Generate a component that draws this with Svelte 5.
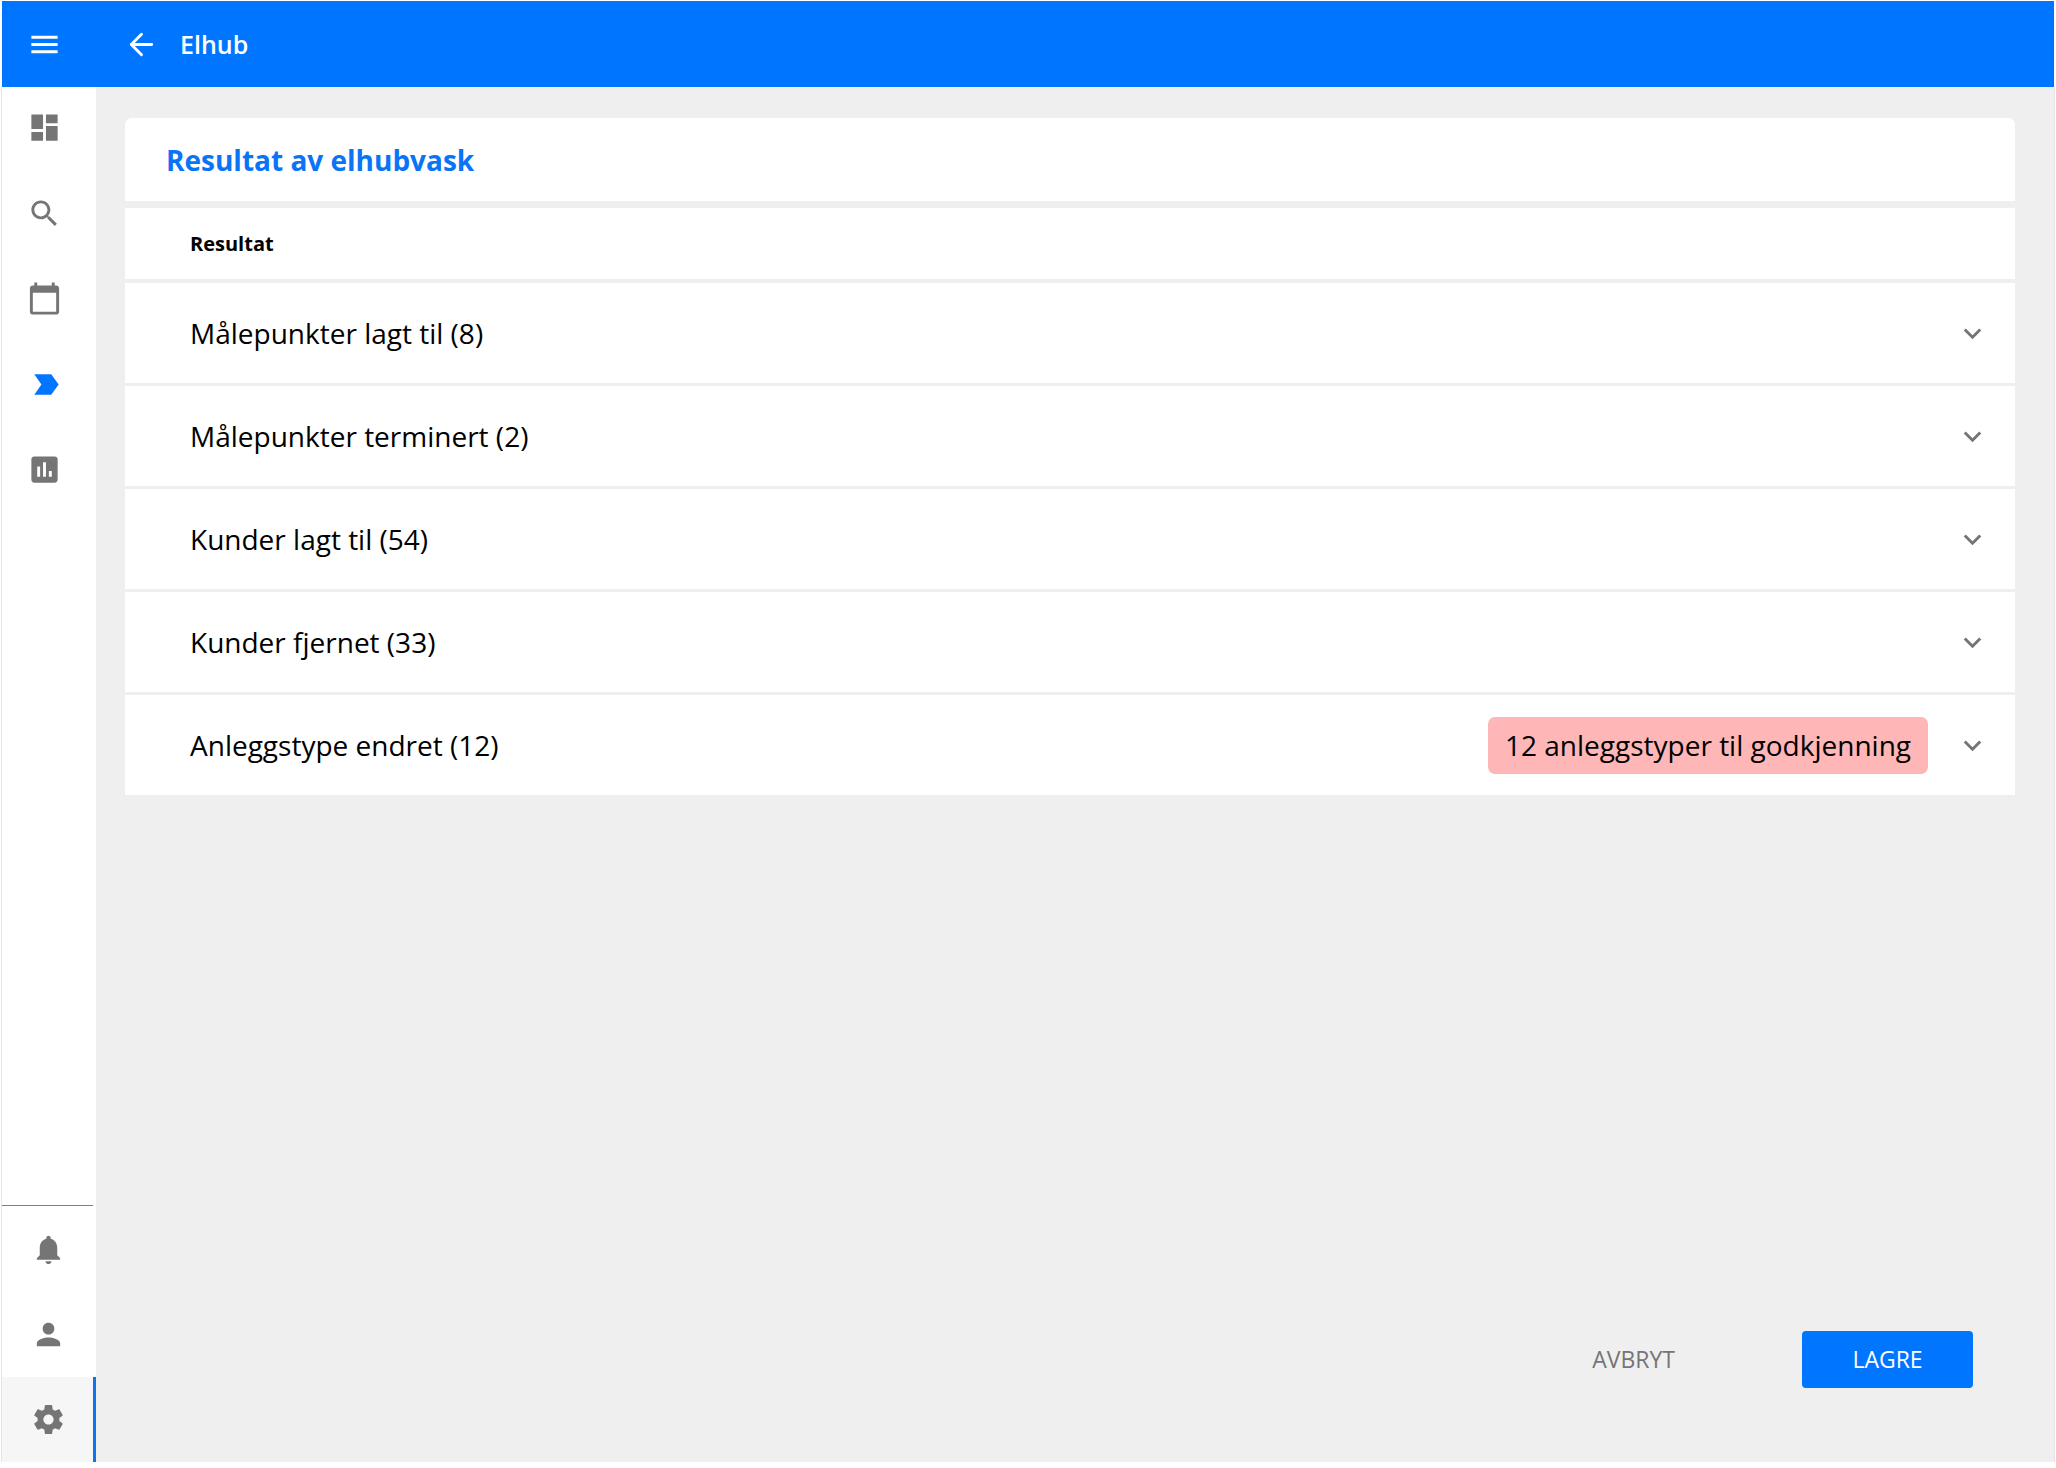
<script>
  const results = [
    { label: 'Målepunkter lagt til', count: 8 },
    { label: 'Målepunkter terminert', count: 2 },
    { label: 'Kunder lagt til', count: 54 },
    { label: 'Kunder fjernet', count: 33 },
    { label: 'Anleggstype endret', count: 12, badge: '12 anleggstyper til godkjenning' },
  ];

  const mainLinks = [
    { name: 'Oversikt', path: 'M3 13h8V3H3v10zm0 8h8v-6H3v6zm10 0h8V11h-8v10zm0-18v6h8V3h-8z' },
    {
      name: 'Søk',
      path: 'M15.5 14h-.79l-.28-.27C15.41 12.59 16 11.11 16 9.5 16 5.91 13.09 3 9.5 3S3 5.91 3 9.5 5.91 16 9.5 16c1.61 0 3.09-.59 4.23-1.57l.27.28v.79l5 4.99L20.49 19l-4.99-5zm-6 0C7.01 14 5 11.99 5 9.5S7.01 5 9.5 5 14 7.01 14 9.5 11.99 14 9.5 14z',
    },
    {
      name: 'Kalender',
      path: 'M20 3h-1V1h-2v2H7V1H5v2H4c-1.1 0-2 .9-2 2v16c0 1.1.9 2 2 2h16c1.1 0 2-.9 2-2V5c0-1.1-.9-2-2-2zm0 18H4V8h16v13z',
    },
    { name: 'Elhub', path: 'M5 5h11.6l5.1 7-5.1 7H5l4.9-7z', active: true },
    {
      name: 'Rapporter',
      path: 'M19 3H5c-1.1 0-2 .9-2 2v14c0 1.1.9 2 2 2h14c1.1 0 2-.9 2-2V5c0-1.1-.9-2-2-2zM9 17H7v-7h2v7zm4 0h-2V7h2v10zm4 0h-2v-4h2v4z',
    },
  ];

  const userLinks = [
    {
      name: 'Varsler',
      path: 'M12 22c1.1 0 2-.9 2-2h-4c0 1.1.89 2 2 2zm6-6v-5c0-3.07-1.64-5.64-4.5-6.32V4c0-.83-.67-1.5-1.5-1.5s-1.5.67-1.5 1.5v.68C7.63 5.36 6 7.92 6 11v5l-2 2v1h16v-1l-2-2z',
    },
    {
      name: 'Profil',
      path: 'M12 12c2.21 0 4-1.79 4-4s-1.79-4-4-4-4 1.79-4 4 1.79 4 4 4zm0 2c-2.67 0-8 1.34-8 4v2h16v-2c0-2.66-5.33-4-8-4z',
    },
    {
      name: 'Innstillinger',
      path: 'M19.43 12.98c.04-.32.07-.64.07-.98s-.03-.66-.07-.98l2.11-1.65c.19-.15.24-.42.12-.64l-2-3.46c-.12-.22-.39-.3-.61-.22l-2.49 1c-.52-.4-1.08-.73-1.69-.98l-.38-2.65C14.46 2.18 14.25 2 14 2h-4c-.25 0-.46.18-.49.42l-.38 2.65c-.61.25-1.17.59-1.69.98l-2.49-1c-.23-.09-.49 0-.61.22l-2 3.46c-.13.22-.07.49.12.64l2.11 1.65c-.04.32-.07.65-.07.98s.03.66.07.98l-2.11 1.65c-.19.15-.24.42-.12.64l2 3.46c.12.22.39.3.61.22l2.49-1c.52.4 1.08.73 1.69.98l.38 2.65c.03.24.24.42.49.42h4c.25 0 .46-.18.49-.42l.38-2.65c.61-.25 1.17-.59 1.69-.98l2.49 1c.23.09.49 0 .61-.22l2-3.46c.12-.22.07-.49-.12-.64l-2.11-1.65zM12 15.5c-1.93 0-3.5-1.57-3.5-3.5s1.57-3.5 3.5-3.5 3.5 1.57 3.5 3.5-1.57 3.5-3.5 3.5z',
      current: true,
    },
  ];

  let open = $state(null);
</script>

<div class="page">
  <header class="topbar">
    <button class="icon-button" aria-label="Meny">
      <svg viewBox="0 0 24 24"><path d="M3 18h18v-2H3v2zm0-5h18v-2H3v2zm0-7v2h18V6H3z" /></svg>
    </button>
    <button class="icon-button back" aria-label="Tilbake">
      <svg viewBox="0 0 24 24">
        <path class="stroke" d="M19 12H5M12 5l-7 7 7 7" />
      </svg>
    </button>
    <h1>Elhub</h1>
  </header>

  <div class="body">
    <aside class="sidebar">
      <nav class="main-links" aria-label="Hovedmeny">
        {#each mainLinks as link}
          <a href="#{link.name}" class:active={link.active} aria-label={link.name}>
            <svg viewBox="0 0 24 24"><path d={link.path} /></svg>
          </a>
        {/each}
      </nav>
      <nav class="user-links" aria-label="Bruker">
        {#each userLinks as link}
          <a href="#{link.name}" class:current={link.current} aria-label={link.name}>
            <svg viewBox="0 0 24 24"><path d={link.path} /></svg>
          </a>
        {/each}
      </nav>
    </aside>

    <main>
      <section>
        <h2>Resultat av elhubvask</h2>
        <h3>Resultat</h3>
        <div class="rows">
          {#each results as row, i}
            <button class="row" aria-expanded={open === i} onclick={() => (open = open === i ? null : i)}>
              <span class="label">{row.label} ({row.count})</span>
              {#if row.badge}<span class="badge">{row.badge}</span>{/if}
              <svg viewBox="0 0 24 24"><path d="M16.59 8.59 12 13.17 7.41 8.59 6 10l6 6 6-6z" /></svg>
            </button>
          {/each}
        </div>
      </section>
      <div class="actions">
        <button class="cancel">AVBRYT</button>
        <button class="save">LAGRE</button>
      </div>
    </main>
  </div>
</div>

<style>
  :global(body) {
    margin: 0;
    background: #fff;
  }

  .page {
    box-sizing: border-box;
    min-height: 100vh;
    padding: 1px 1px 6px;
    display: flex;
    flex-direction: column;
    font-family: 'Open Sans', sans-serif;
    color: #000;
  }

  button {
    margin: 0;
    padding: 0;
    border: 0;
    background: none;
    font: inherit;
    color: inherit;
    cursor: pointer;
  }

  svg {
    display: block;
    width: 35px;
    height: 35px;
    flex: none;
    fill: currentColor;
  }

  .topbar {
    display: flex;
    align-items: center;
    height: 86px;
    margin: 0 1px;
    padding-left: 25px;
    background: #0075ff;
    color: #fff;
  }

  .back {
    margin-left: 62px;
  }

  .stroke {
    fill: none;
    stroke: currentColor;
    stroke-width: 2;
    stroke-linecap: round;
    stroke-linejoin: round;
  }

  h1 {
    margin: 0 0 0 21px;
    font-size: 25px;
    font-weight: 600;
    line-height: 36px;
  }

  .body {
    flex: 1;
    display: flex;
    border: solid #e4e4e4;
    border-width: 0 1px;
  }

  .sidebar {
    display: flex;
    flex-direction: column;
    justify-content: space-between;
    width: 94px;
    background: #fff;
    color: #757575;
  }

  .main-links {
    display: flex;
    flex-direction: column;
    justify-content: space-between;
    height: 377px;
    padding: 23px 0 0 25px;
  }

  .main-links a,
  .user-links a {
    color: inherit;
  }

  .main-links .active {
    color: #0075ff;
  }

  .user-links {
    padding-top: 2px;
    background: linear-gradient(#808080, #808080) 0 0 / 91px 1px no-repeat;
  }

  .user-links a {
    box-sizing: border-box;
    display: flex;
    align-items: center;
    height: 85px;
    padding-left: 29px;
  }

  .user-links .current {
    background: #f6f6f6;
    border-right: 3px solid #0f73ee;
  }

  main {
    flex: 1;
    display: flex;
    flex-direction: column;
    justify-content: space-between;
    padding: 31px 39px 74px 29px;
    background: #efefef;
  }

  h2,
  h3 {
    margin: 0;
    background: #fff;
    font-weight: 700;
  }

  h2 {
    padding: 22px 41px 21px;
    border-radius: 7px 7px 0 0;
    font-size: 28px;
    line-height: 40px;
    color: #0a74f7;
  }

  h3 {
    margin-top: 7px;
    padding: 22px 65px 21px;
    font-size: 20px;
    line-height: 28px;
  }

  .rows {
    display: flex;
    flex-direction: column;
    gap: 3px;
    margin-top: 4px;
  }

  .row {
    display: flex;
    align-items: center;
    gap: 27px;
    min-height: 100px;
    padding: 0 25px 0 65px;
    background: #fff;
    font-size: 28px;
    line-height: 40px;
    text-align: left;
  }

  .row svg {
    color: #757575;
  }

  .label {
    flex: 1;
  }

  .badge {
    padding: 8px 17px 9px;
    border-radius: 7px;
    background: #ffb6b6;
  }

  .actions {
    display: flex;
    justify-content: flex-end;
    align-items: center;
    gap: 86px;
    padding-right: 42px;
    font-size: 23px;
    line-height: 32px;
  }

  .cancel {
    padding: 0 41px 1px;
    color: #757575;
  }

  .save {
    min-width: 171px;
    padding: 12px 24px 13px;
    border-radius: 4px;
    background: #0075ff;
    color: #fff;
  }
</style>
